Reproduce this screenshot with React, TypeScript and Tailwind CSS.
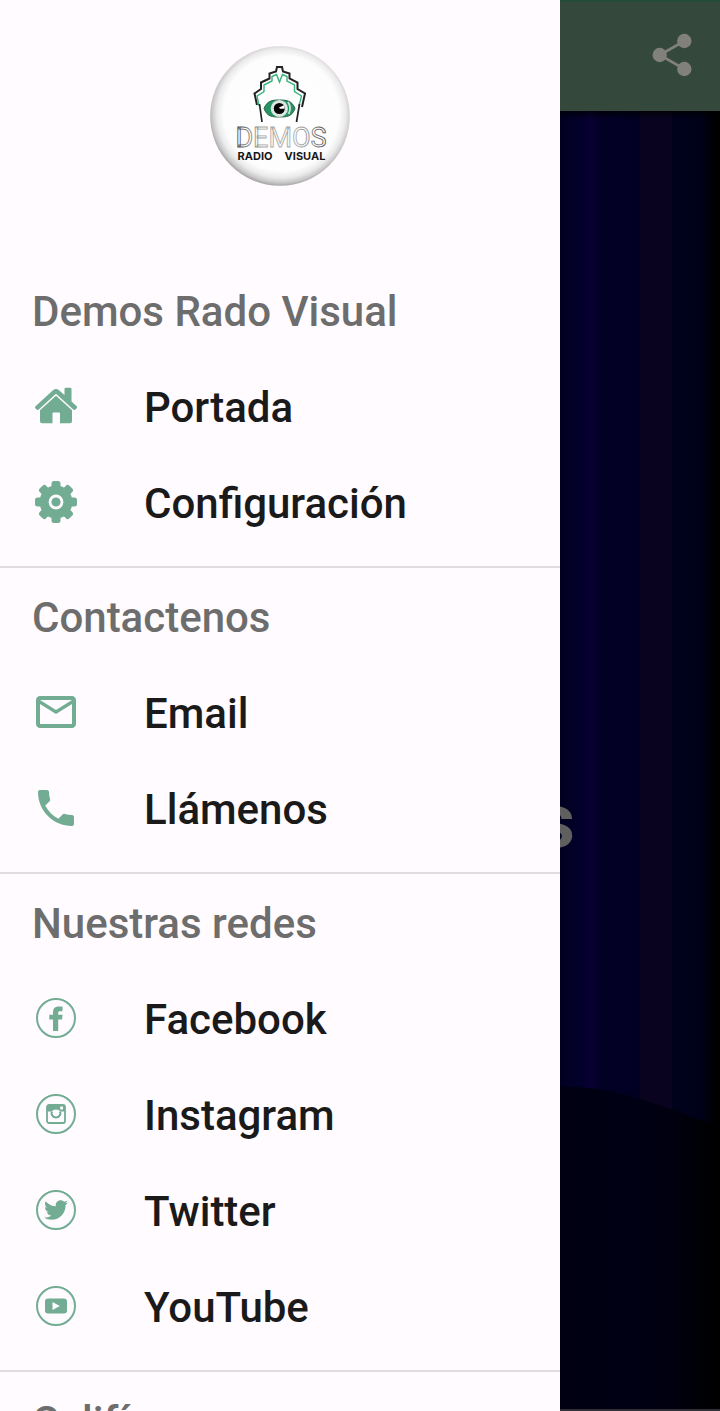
import type { ReactNode } from "react";
import { FaTwitter } from "react-icons/fa";

type Item = { label: string; icon: ReactNode };
type Section = { title: string; items: Item[] };

function HomeIcon() {
  return (
    <svg viewBox="0 0 48 48" className="size-12" fill="currentColor" aria-hidden="true">
      <path d="M3.500 24.200L21 8.200Q24 5.600 27 8.200L32.500 13V7Q32.500 5.800 33.700 5.800H38.300Q39.500 5.800 39.500 7V19.400L44.700 24.200Q45.600 25.100 44.800 26.100L43.500 27.600Q42.600 28.500 41.600 27.700L24 11.800L6.400 27.700Q5.400 28.500 4.500 27.600L3.200 26.100Q2.500 25.100 3.500 24.200Z" />
      <path d="M24 13.800L40 28.200V38.700Q40 41.200 37.500 41.200H28V31.500Q28 30.500 27 30.500H21.500Q20.500 30.500 20.500 31.500V41.200H10.500Q8 41.200 8 38.700V28.200Z" />
    </svg>
  );
}

function GearIcon() {
  return (
    <svg viewBox="0 0 48 48" className="size-12" fill="currentColor" aria-hidden="true">
      {[0, 45, 90, 135].map((angle) => (
        <rect key={angle} x="19.500" y="3" width="9" height="42" rx="2.500" transform={`rotate(${angle} 24 24)`} />
      ))}
      <circle cx="24" cy="24" r="16.500" />
      <circle cx="24" cy="24" r="6" fill="none" stroke="#fffbff" strokeWidth="2.800" />
    </svg>
  );
}

function MailIcon() {
  return (
    <svg viewBox="0 0 24 24" className="size-12" fill="currentColor" aria-hidden="true">
      <path d="M22 6c0-1.100-.9-2-2-2H4c-1.100 0-2 .9-2 2v12c0 1.100.9 2 2 2h16c1.100 0 2-.9 2-2V6zm-2 0l-8 5-8-5h16zm0 12H4V8l8 5 8-5v10z" />
    </svg>
  );
}

function PhoneIcon() {
  return (
    <svg viewBox="0 0 24 24" className="size-12" fill="currentColor" aria-hidden="true">
      <path d="M6.620 10.790c1.440 2.830 3.760 5.140 6.590 6.590l2.200-2.200c.27-.27.67-.36 1.020-.24 1.120.37 2.330.57 3.570.57.55 0 1 .45 1 1V20c0 .55-.45 1-1 1-9.390 0-17-7.610-17-17 0-.55.45-1 1-1h3.500c.55 0 1 .45 1 1 0 1.250.2 2.450.57 3.570.11.35.03.74-.25 1.020l-2.200 2.200z" />
    </svg>
  );
}

function Ring({ children }: { children: ReactNode }) {
  return (
    <span className="flex size-10 items-center justify-center rounded-full border-2 border-current">{children}</span>
  );
}

function FacebookIcon() {
  return (
    <Ring>
      <svg viewBox="0 0 14 25" className="h-[25px] w-3.5" fill="currentColor" aria-hidden="true">
        <path d="M4 25V13.600H.3V8.700H4V6.500C4 2.500 6 .5 9.500 .5H13.500V5.200H10.900C9.600 5.200 9.200 5.800 9.200 6.900V8.700H13.600L13 13.600H9.200V25Z" />
      </svg>
    </Ring>
  );
}

function InstagramIcon() {
  return (
    <Ring>
      <svg viewBox="0 0 20 20" className="size-5" fill="currentColor" aria-hidden="true">
        <rect x="1" y="1" width="18" height="18" rx="2" fill="none" stroke="currentColor" strokeWidth="1.800" />
        <path d="M1 7.500V3Q1 1 3 1H17Q19 1 19 3V7.500H14.500Q13 5.600 10 5.600T5.500 7.500Z" />
        <rect x="14.200" y="2.600" width="2.800" height="2.800" rx=".4" fill="#fffbff" />
        <path d="M5.900 7.500A4.400 4.400 0 1 0 14.100 7.500" fill="none" stroke="currentColor" strokeWidth="2" />
      </svg>
    </Ring>
  );
}

function TwitterIcon() {
  return (
    <Ring>
      <FaTwitter className="size-6" aria-hidden="true" />
    </Ring>
  );
}

function YouTubeIcon() {
  return (
    <Ring>
      <svg viewBox="0 0 22 16" className="h-4 w-[22px]" aria-hidden="true">
        <rect y=".5" width="22" height="15" rx="3" fill="currentColor" />
        <path d="M7.500 4L14.800 8L7.500 12Z" fill="#fffbff" />
      </svg>
    </Ring>
  );
}

function ShareIcon() {
  return (
    <svg viewBox="0 0 48 48" className="size-12" fill="currentColor" aria-hidden="true">
      <path d="M36.300 10L11.700 24L36.300 38" fill="none" stroke="currentColor" strokeWidth="2.600" />
      <circle cx="36.300" cy="10" r="7.200" />
      <circle cx="11.700" cy="24" r="7.200" />
      <circle cx="36.300" cy="38" r="7.200" />
    </svg>
  );
}

function Logo() {
  return (
    <svg viewBox="0 0 140 140" className="size-[140px]" role="img" aria-label="Demos Radio Visual">
      <defs>
        <radialGradient id="disc" cx="51%" cy="48%" r="53%">
          <stop offset="0" stopColor="#ffffff" />
          <stop offset=".78" stopColor="#fdfdfd" />
          <stop offset=".87" stopColor="#ebebeb" />
          <stop offset=".94" stopColor="#c8c8c8" />
          <stop offset="1" stopColor="#959595" />
        </radialGradient>
        <linearGradient id="letters" x1="0" x2="1">
          <stop offset="0" stopColor="#444444" />
          <stop offset=".3" stopColor="#a5a5a5" />
          <stop offset=".7" stopColor="#a5a5a5" />
          <stop offset="1" stopColor="#444444" />
        </linearGradient>
      </defs>
      <circle cx="70" cy="70" r="69.800" fill="url(#disc)" />
      <g fill="none" strokeLinejoin="miter">
        <path
          d="M47 59L44.500 47.500L51 43V36.500L59.500 32.500V27.500L66 25.500L67 21H72L73 25.500L79.500 27.500V32.500L87.500 36.500V43L95 47.500L92 61"
          stroke="#222222"
          strokeWidth="2"
        />
        <path
          d="M49 60L47 50L54 45.500V39L62 35V30.500L66.500 28.500L69.500 36L72.500 28.500L77 30.500V35L84.500 39V45.500L91.500 50L89 60"
          stroke="#38b27d"
          strokeWidth="1.400"
        />
        <path d="M49.500 58L52 76M89.500 58L86.500 76" stroke="#222222" strokeWidth="1.700" />
      </g>
      <path d="M54 62.500C57 54 64 54 69.500 54S82 54 85 62.500C82 71 76 71 69.500 71S57 71 54 62.500Z" fill="#279365" stroke="#2d654c" />
      <circle cx="69.300" cy="62.500" r="8.600" fill="#dce7e2" />
      <circle cx="69.300" cy="62.500" r="5.500" fill="#050505" />
      <path d="M78 56Q82 62 78.500 68" fill="none" stroke="#c4e5d7" strokeWidth="1.800" />
      <path d="M69 61.500L74.500 59V62.800H70Z" fill="#ffffff" />
      <text x="71" y="101" textAnchor="middle" fill="#fafafa" stroke="url(#letters)" strokeWidth=".8" className="font-['Roboto',sans-serif] text-[27px] leading-none font-normal">
        DEMOS
      </text>
      <g fill="#181818" textAnchor="middle" className="font-['Inter',sans-serif] text-[11px] leading-none font-bold">
        <text x="45" y="114">RADIO</text>
        <text x="95" y="114">VISUAL</text>
      </g>
    </svg>
  );
}

const sections: Section[] = [
  {
    title: "Demos Rado Visual",
    items: [
      { label: "Portada", icon: <HomeIcon /> },
      { label: "Configuración", icon: <GearIcon /> },
    ],
  },
  {
    title: "Contactenos",
    items: [
      { label: "Email", icon: <MailIcon /> },
      { label: "Llámenos", icon: <PhoneIcon /> },
    ],
  },
  {
    title: "Nuestras redes",
    items: [
      { label: "Facebook", icon: <FacebookIcon /> },
      { label: "Instagram", icon: <InstagramIcon /> },
      { label: "Twitter", icon: <TwitterIcon /> },
      { label: "YouTube", icon: <YouTubeIcon /> },
    ],
  },
  { title: "Califícanos", items: [] },
];

function MenuSection({ title, items }: Section) {
  return (
    <section className="border-b-2 border-[#e0dce0] pb-4 last:border-b-0">
      <h2 className="flex h-24 items-center px-8 pt-1 text-[#6d6d6d]">{title}</h2>
      <ul>
        {items.map(({ label, icon }) => (
          <li key={label}>
            <a href="#" className="flex h-24 items-center gap-16 px-8 text-[#1a1a1a]">
              <span className="flex size-12 shrink-0 items-center justify-center text-[#72ac93]">{icon}</span>
              <span className="pt-1">{label}</span>
            </a>
          </li>
        ))}
      </ul>
    </section>
  );
}

function Backdrop() {
  return (
    <svg viewBox="0 0 160 1300" preserveAspectRatio="none" className="absolute inset-0 size-full" aria-hidden="true">
      <defs>
        <linearGradient id="curtain" x1="0" x2="1">
          <stop offset="0" stopColor="#01001f" />
          <stop offset=".08" stopColor="#030028" />
          <stop offset=".15" stopColor="#02002c" />
          <stop offset=".19" stopColor="#080032" />
          <stop offset=".22" stopColor="#06002e" />
          <stop offset=".25" stopColor="#020024" />
          <stop offset=".5" stopColor="#010023" />
          <stop offset=".5" stopColor="#090320" />
          <stop offset=".7" stopColor="#090320" />
          <stop offset=".7" stopColor="#01011c" />
          <stop offset=".88" stopColor="#000119" />
          <stop offset=".97" stopColor="#000000" />
          <stop offset="1" stopColor="#000000" />
        </linearGradient>
        <linearGradient id="floor" x1="0" x2="1">
          <stop offset="0" stopColor="#000012" />
          <stop offset=".5" stopColor="#000014" />
          <stop offset=".75" stopColor="#00000e" />
          <stop offset=".97" stopColor="#000000" />
        </linearGradient>
        <linearGradient id="shade" x1="0" x2="0" y1="0" y2="1">
          <stop offset="0" stopColor="#000000" stopOpacity=".7" />
          <stop offset="1" stopColor="#000000" stopOpacity="0" />
        </linearGradient>
      </defs>
      <rect width="160" height="1300" fill="url(#curtain)" />
      <path d="M0 977Q35 977 65 985T160 1018V1300H0Z" fill="url(#floor)" />
      <rect width="160" height="8" fill="url(#shade)" />
    </svg>
  );
}

export default function App() {
  return (
    <div className="flex h-screen overflow-hidden bg-black font-['Roboto',sans-serif] text-[42px] leading-[48px] font-medium">
      <nav aria-label="Menú" className="w-7/9 shrink-0 overflow-hidden bg-[#fffbff]">
        <div className="flex h-[262px] justify-center pt-[46px]">
          <Logo />
        </div>
        {sections.map((section) => (
          <MenuSection key={section.title} {...section} />
        ))}
      </nav>
      <div className="flex min-w-0 flex-1 flex-col border-b-2 border-[#302f35]">
        <header className="flex h-[111px] shrink-0 items-center justify-end border-t-2 border-[#244a38] bg-[#34483b] pr-6 pb-1">
          <button type="button" aria-label="Compartir" className="text-[#82807d]">
            <ShareIcon />
          </button>
        </header>
        <main className="relative flex flex-1 overflow-hidden">
          <Backdrop />
          <p className="relative -ml-6 pt-[674px] text-[76px] leading-[72px] font-bold text-[#5f5f5f]">s</p>
        </main>
      </div>
    </div>
  );
}
